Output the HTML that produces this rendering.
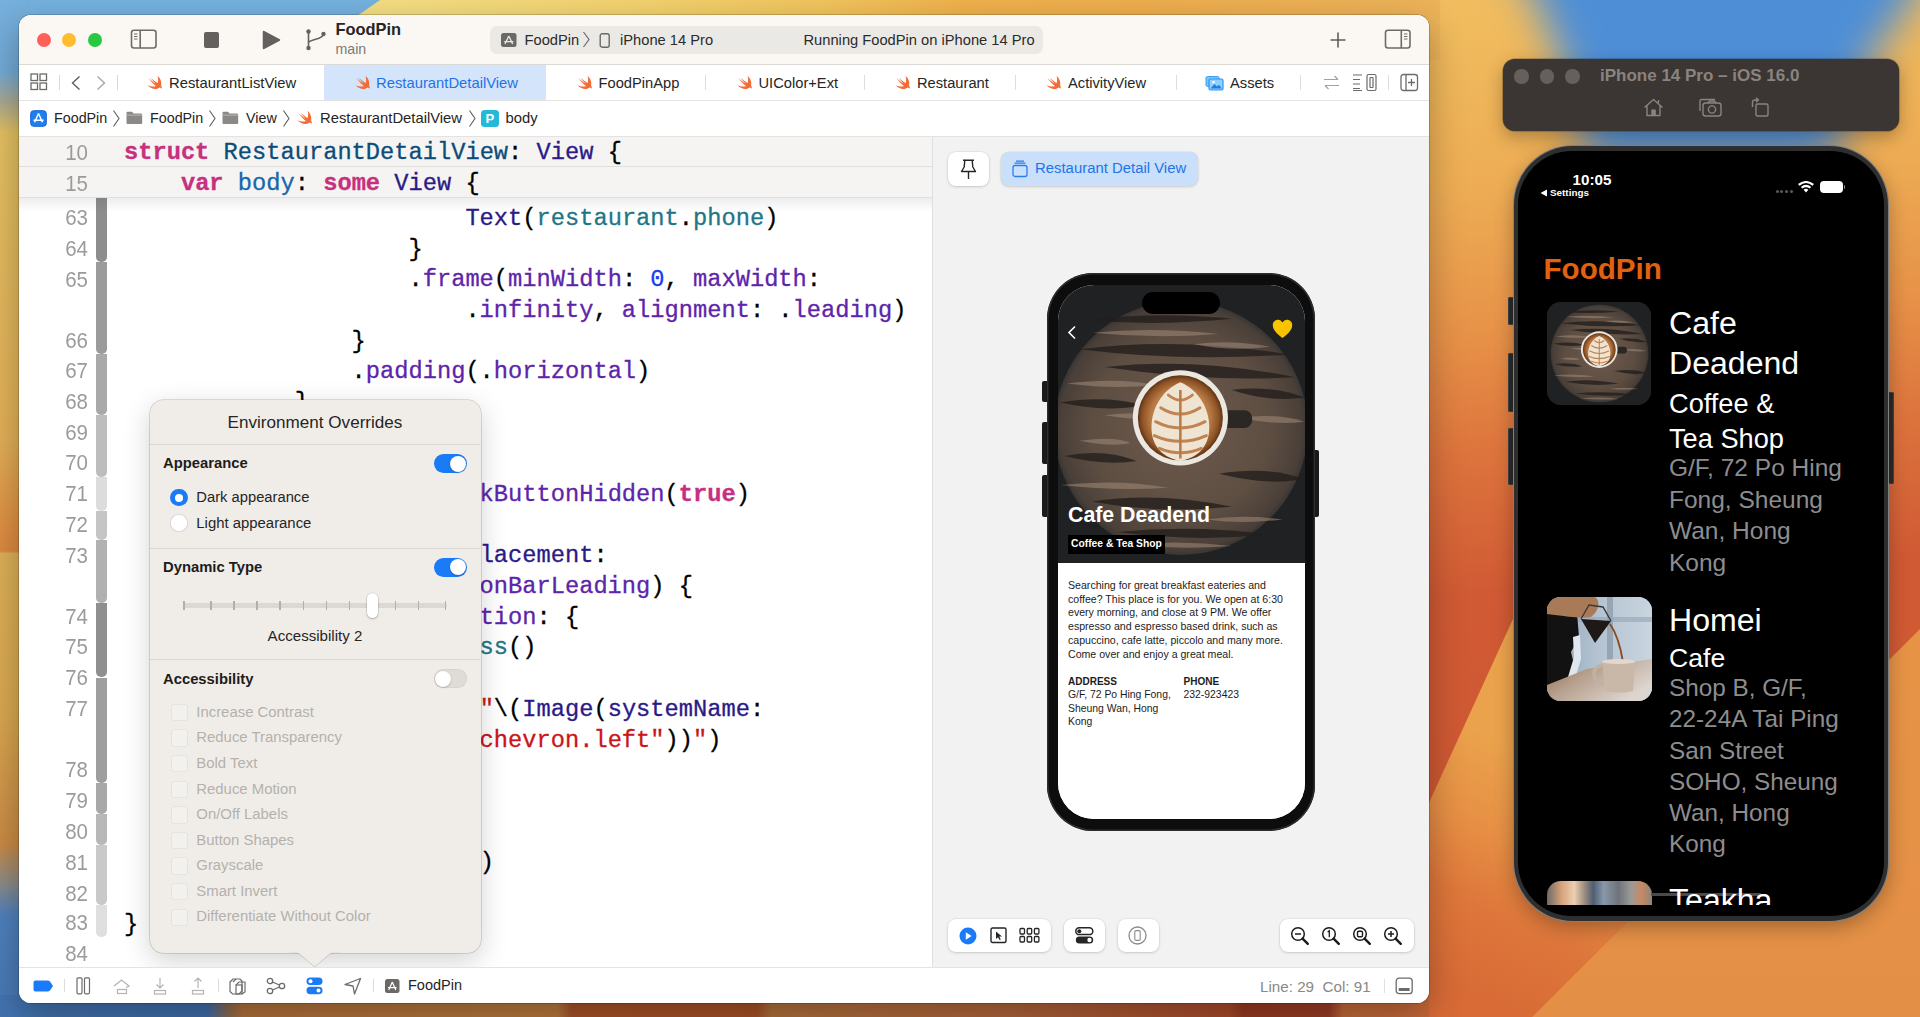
<!DOCTYPE html>
<html><head><meta charset="utf-8">
<style>
*{margin:0;padding:0;box-sizing:border-box}
html,body{width:1920px;height:1017px;overflow:hidden}
body{position:relative;font-family:"Liberation Sans",sans-serif;background:#e0873f}
.a{position:absolute}
.mono{font-family:"Liberation Mono",monospace}
#wall{position:absolute;left:0;top:0;width:1920px;height:1017px;overflow:hidden;background:linear-gradient(100deg,#e9a24e 0%,#e58a3c 50%,#df6c35 75%,#ea9a47 100%)}
#wall div{position:absolute;border-radius:50%}
#win{position:absolute;left:19px;top:15px;width:1410px;height:988px;border-radius:12px;overflow:hidden;background:#fff;box-shadow:0 0 0 0.8px rgba(0,0,0,.22),0 12px 35px rgba(0,0,0,.3)}
#wi{position:absolute;left:-19px;top:-15px;width:1920px;height:1017px}
.t{position:absolute;white-space:pre;line-height:1}
</style></head><body>
<svg width="0" height="0" style="position:absolute">
 <defs>
  <linearGradient id="swg" x1="0" y1="0" x2="1" y2="1"><stop offset="0" stop-color="#f88a36"/><stop offset="1" stop-color="#f05138"/></linearGradient>
  <symbol id="swift" viewBox="0 0 16 15"><path d="M10.5 0.8 C13.8 3.5 14.8 7.5 14.1 10.6 C14.6 11.5 15 12.6 15 13.8 C14.4 13 13.6 12.6 12.8 12.5 C10 14.6 5 15 0.5 10.3 C3.5 11.8 7 12 9 11 C6.6 9.2 3.5 6 1.4 3 C4 5.5 6.8 7.6 8.6 8.7 C6.8 6.8 5 4.8 3.6 2.8 C6 5 8.5 7 10.6 8.2 C11.4 5.6 11.3 3 10.5 0.8Z" fill="#f36b35"/></symbol>
  <radialGradient id="wood" cx="0.5" cy="0.5" r="0.5"><stop offset="0" stop-color="#6c5a4c"/><stop offset="0.7" stop-color="#5e4e42"/><stop offset="0.95" stop-color="#4a4039"/><stop offset="1" stop-color="#3a3633"/></radialGradient>
  <radialGradient id="crema" cx="0.5" cy="0.5" r="0.5"><stop offset="0" stop-color="#d39a62"/><stop offset="0.7" stop-color="#b87a44"/><stop offset="0.9" stop-color="#8d5226"/><stop offset="1" stop-color="#5e3415"/></radialGradient>
  <symbol id="coffee" viewBox="-130 -130 260 260">
    <rect x="-130" y="-130" width="260" height="260" fill="#1f2123"/>
    <circle cx="0" cy="0" r="100" fill="url(#wood)"/>
    <g fill="#231f1d" opacity="0.8">
      <path d="M-80 -62 Q0 -72 85 -58 Q0 -52 -80 -62Z"/>
      <path d="M-60 -48 Q10 -56 90 -40 Q20 -36 -60 -48Z"/>
      <path d="M-95 -20 Q-60 -26 -30 -18 Q-60 -12 -95 -20Z"/>
      <path d="M40 -30 Q70 -34 98 -24 Q70 -20 40 -30Z"/>
      <path d="M-92 22 Q-60 16 -35 26 Q-60 30 -92 22Z"/>
      <path d="M30 36 Q70 30 96 40 Q70 46 30 36Z"/>
      <path d="M-70 58 Q-20 50 40 62 Q-20 68 -70 58Z"/>
      <path d="M-50 82 Q10 76 70 84 Q10 90 -50 82Z"/>
      <path d="M-75 -85 Q-20 -92 40 -86 Q-20 -80 -75 -85Z"/>
    </g>
    <g fill="#a08a78" opacity="0.55">
      <path d="M-70 -75 Q-20 -80 30 -74 Q-20 -70 -70 -75Z"/>
      <path d="M-90 -35 Q-50 -40 -20 -34 Q-50 -30 -90 -35Z"/>
      <path d="M45 -8 Q75 -12 97 -5 Q75 -2 45 -8Z"/>
      <path d="M-95 45 Q-50 40 -10 47 Q-50 50 -95 45Z"/>
      <path d="M20 72 Q50 68 80 72 Q50 76 20 72Z"/>
      <path d="M-60 -10 Q-30 -14 -5 -8 Q-30 -5 -60 -10Z"/>
      <path d="M10 -66 Q40 -70 70 -64 Q40 -60 10 -66Z"/>
      <path d="M-80 10 Q-50 6 -40 12 Q-55 15 -80 10Z"/>
      <path d="M-40 92 Q0 88 40 93 Q0 96 -40 92Z"/>
    </g>
    <rect x="30" y="-14" width="26" height="14" rx="6" fill="#2a2725"/>
    <circle cx="-0.5" cy="-8" r="37.5" fill="#ebe7e1"/>
    <circle cx="-0.5" cy="-8" r="33.5" fill="url(#crema)"/>
    <path d="M-0.5 -36 C14 -30 24 -14 22 4 C20 18 10 24 -0.5 26 C-11 24 -21 18 -23 4 C-25 -14 -15 -30 -0.5 -36Z" fill="#efe3d2"/>
    <g fill="none" stroke="#c08352" stroke-width="2.3" stroke-linecap="round">
      <path d="M-16 -16 Q-0.5 -6 15 -16"/>
      <path d="M-20 -5 Q-0.5 5 19 -5"/>
      <path d="M-21 6 Q-0.5 15 20 6"/>
      <path d="M-17 16 Q-0.5 23 16 16"/>
      <path d="M-10 -26 Q-0.5 -18 9 -26"/>
    </g>
    <path d="M-0.5 -30 V24" stroke="#b97b45" stroke-width="2" fill="none"/>
  </symbol>
 </defs>
</svg>
<div id="wall">
  <div style="border-radius:0;left:0;top:0;width:1920px;height:1017px;background:linear-gradient(175deg,#efbe6c 0%,#f0bc5e 12%,#edac54 27%,#e79248 39%,#dd743d 49%,#d05a34 61%,#cf5733 100%)"></div>
  <div style="border-radius:0;left:0;top:0;width:1920px;height:1017px;clip-path:polygon(1380px 910px,1620px 385px,1760px 385px,1760px 789px,1532px 1017px,1380px 1017px);background:linear-gradient(205deg,#eca64e 0%,#eba24c 49%,#e68f44 54%,#de773b 58%,#d86b36 63%,#d56634 100%)"></div>
  <div style="border-radius:0;left:0;top:0;width:1920px;height:1017px;clip-path:polygon(1532px 1017px,1920px 629px,1920px 1017px);background:linear-gradient(0deg,#e48f46 0%,#e89546 50%,#eba04b 100%)"></div>
  <div style="border-radius:0;left:0;top:-200px;width:1920px;height:600px;filter:blur(20px)"><div style="border-radius:0;position:absolute;left:0;top:0;width:1920px;height:600px;clip-path:polygon(1400px 0px,2050px 0px,1912px 200px,1870px 259px,1830px 362px,1590px 362px,1561px 259px,1537px 200px);background:#4d8ed6"></div></div>
  <!-- top strip (left part) -->
  <div style="border-radius:0;left:0;top:0;width:1440px;height:60px;background:linear-gradient(90deg,#f5e18c 0%,#f4dd82 28%,#f3d26e 45%,#f1c35c 58%,#efb24c 67%,#eeae4e 80%,#ecb35a 100%)"></div>
  <div style="border-radius:0;left:0;top:0;width:400px;height:60px;clip-path:polygon(0 0,380px 0,357px 16px,0 16px);background:#75b2df"></div>
  <!-- left strip -->
  <div style="border-radius:0;left:0;top:0;width:30px;height:1017px;background:linear-gradient(180deg,#76b0dc 0%,#72a9d6 7%,#a8a890 10%,#e2c062 13%,#e2b058 43%,#de8f42 52%,#dc8840 54.2%,#dcb058 54.4%,#d9a850 70%,#c98a45 83%,#8a8a8a 87%,#4f80bc 90%,#4777b2 100%)"></div>
  <!-- bottom strip -->
  <div style="border-radius:0;left:0;top:995px;width:1429px;height:30px;background:linear-gradient(90deg,#4273b0 0%,#3f6ca8 14.5%,#8a6a50 16%,#b0703a 17%,#b8783a 39%,#a85228 40%,#a65026 53%,#b0703a 54%,#b0643a 70%,#a84a2a 86%,#983a22 87%,#9a3c24 93%,#c06838 94%,#c86838 100%)"></div>
</div>
<div id="win"><div id="wi">
  <!-- toolbar -->
  <div class="a" style="left:0;top:0;width:1920px;height:64px;background:#fbf8f3"></div>
  <div class="a" style="left:0;top:64px;width:1920px;height:1px;background:#dcdad7"></div>
  <div class="a" style="left:36.5px;top:32.5px;width:14px;height:14px;border-radius:50%;background:#fe5f57"></div>
  <div class="a" style="left:62px;top:32.5px;width:14px;height:14px;border-radius:50%;background:#febc2e"></div>
  <div class="a" style="left:87.5px;top:32.5px;width:14px;height:14px;border-radius:50%;background:#28c840"></div>
  <svg class="a" style="left:130px;top:29px" width="28" height="21" viewBox="0 0 28 21"><rect x="1.5" y="1.2" width="24.5" height="17.8" rx="2.5" fill="none" stroke="#6d6b69" stroke-width="1.6"/><line x1="10.2" y1="1.5" x2="10.2" y2="19" stroke="#6d6b69" stroke-width="1.6"/><line x1="4" y1="5" x2="7.5" y2="5" stroke="#6d6b69" stroke-width="1.1"/><line x1="4" y1="7.5" x2="7.5" y2="7.5" stroke="#6d6b69" stroke-width="1.1"/><line x1="4" y1="10" x2="7.5" y2="10" stroke="#6d6b69" stroke-width="1.1"/></svg>
  <div class="a" style="left:203.5px;top:32px;width:15.5px;height:15.5px;border-radius:2px;background:#63605e"></div>
  <svg class="a" style="left:262px;top:30px" width="19" height="20" viewBox="0 0 19 20"><path d="M1.5 1.5 L17.5 10 L1.5 18.5 Z" fill="#63605e" stroke="#63605e" stroke-width="1.5" stroke-linejoin="round"/></svg>
  <svg class="a" style="left:304px;top:28px" width="24" height="24" viewBox="0 0 24 24"><circle cx="4.5" cy="3.5" r="2.2" fill="#63605e"/><circle cx="4.5" cy="20" r="2.2" fill="#63605e"/><circle cx="19.5" cy="6" r="2.2" fill="#63605e"/><path d="M4.5 4 V20 M4.5 15 C4.5 11 19.5 12 19.5 6" fill="none" stroke="#63605e" stroke-width="1.6"/></svg>
  <div class="t" style="left:335.5px;top:21px;font-size:16.4px;font-weight:bold;color:#262524">FoodPin</div>
  <div class="t" style="left:335.5px;top:42px;font-size:14.2px;color:#7b7977">main</div>
  <div class="a" style="left:490px;top:25.5px;width:553px;height:28px;border-radius:7px;background:#ebe9e6"></div>
  <svg class="a" style="left:501px;top:33px" width="16" height="15" viewBox="0 0 16 15"><rect x="0" y="0" width="15.5" height="14" rx="2.5" fill="#6b6866"/><path d="M7.8 3 L4 11 M7.8 3 L11.6 11 M3.2 8.6 H12.4" stroke="#ebe9e6" stroke-width="1.3" fill="none"/></svg>
  <div class="t" style="left:524.5px;top:33px;font-size:14.7px;color:#2c2b2a">FoodPin</div>
  <svg class="a" style="left:582px;top:31px" width="9" height="17" viewBox="0 0 9 17"><path d="M1.5 1 L7 8.5 L1.5 16" fill="none" stroke="#6b6866" stroke-width="1.2"/></svg>
  <svg class="a" style="left:599px;top:33px" width="12" height="15" viewBox="0 0 12 15"><rect x="1.2" y="0.8" width="9" height="13.4" rx="2" fill="none" stroke="#6b6866" stroke-width="1.4"/></svg>
  <div class="t" style="left:620px;top:33px;font-size:14.7px;color:#2c2b2a">iPhone 14 Pro</div>
  <div class="t" style="left:803.5px;top:33px;font-size:14.7px;color:#2c2b2a">Running FoodPin on iPhone 14 Pro</div>
  <svg class="a" style="left:1329px;top:31px" width="18" height="18" viewBox="0 0 18 18"><path d="M9 1.5 V16.5 M1.5 9 H16.5" stroke="#5f5d5b" stroke-width="1.6"/></svg>
  <svg class="a" style="left:1384px;top:29px" width="28" height="21" viewBox="0 0 28 21"><rect x="1.5" y="1.2" width="24.5" height="17.8" rx="2.5" fill="none" stroke="#6d6b69" stroke-width="1.6"/><line x1="17.3" y1="1.5" x2="17.3" y2="19" stroke="#6d6b69" stroke-width="1.6"/><line x1="20" y1="5" x2="23.5" y2="5" stroke="#6d6b69" stroke-width="1.1"/><line x1="20" y1="7.5" x2="23.5" y2="7.5" stroke="#6d6b69" stroke-width="1.1"/><line x1="20" y1="10" x2="23.5" y2="10" stroke="#6d6b69" stroke-width="1.1"/></svg>
  <!-- tabs -->
  <div class="a" style="left:0;top:65px;width:1920px;height:35px;background:#fff"></div>
  <div class="a" style="left:0;top:100px;width:1920px;height:1px;background:#e4e3e2"></div>
  <div class="a" style="left:324px;top:65px;width:222px;height:35px;background:#d3e4fb"></div>
  <svg class="a" style="left:30px;top:73px" width="18" height="18" viewBox="0 0 18 18"><g fill="none" stroke="#6d6b69" stroke-width="1.3"><rect x="1" y="1" width="6.5" height="6.5"/><rect x="10" y="1" width="6.5" height="6.5"/><rect x="1" y="10" width="6.5" height="6.5"/><rect x="10" y="10" width="6.5" height="6.5"/></g></svg>
  <div class="a" style="left:59px;top:75px;width:1px;height:15px;background:#d8d8d8"></div>
  <svg class="a" style="left:70px;top:75px" width="12" height="16" viewBox="0 0 12 16"><path d="M9.5 1.5 L2.5 8 L9.5 14.5" fill="none" stroke="#5f5d5b" stroke-width="1.4"/></svg>
  <svg class="a" style="left:95px;top:75px" width="12" height="16" viewBox="0 0 12 16"><path d="M2.5 1.5 L9.5 8 L2.5 14.5" fill="none" stroke="#a9a7a5" stroke-width="1.4"/></svg>
  <div class="a" style="left:117px;top:75px;width:1px;height:15px;background:#d8d8d8"></div>
  <svg class="a sw" style="left:147px;top:75px" width="16" height="15" viewBox="0 0 16 15"><use href="#swift"/></svg>
  <div class="t" style="left:169px;top:75.5px;font-size:14.8px;color:#262524">RestaurantListView</div>
  <svg class="a sw" style="left:354.5px;top:75px" width="16" height="15" viewBox="0 0 16 15"><use href="#swift"/></svg>
  <div class="t" style="left:376px;top:75.5px;font-size:14.8px;color:#1f73e5">RestaurantDetailView</div>
  <svg class="a sw" style="left:577px;top:75px" width="16" height="15" viewBox="0 0 16 15"><use href="#swift"/></svg>
  <div class="t" style="left:598.5px;top:75.5px;font-size:14.7px;color:#262524">FoodPinApp</div>
  <div class="a" style="left:705px;top:75px;width:1px;height:15px;background:#dedede"></div>
  <svg class="a sw" style="left:736.5px;top:75px" width="16" height="15" viewBox="0 0 16 15"><use href="#swift"/></svg>
  <div class="t" style="left:758.5px;top:75.5px;font-size:14.7px;color:#262524">UIColor+Ext</div>
  <div class="a" style="left:863.5px;top:75px;width:1px;height:15px;background:#dedede"></div>
  <svg class="a sw" style="left:895px;top:75px" width="16" height="15" viewBox="0 0 16 15"><use href="#swift"/></svg>
  <div class="t" style="left:917px;top:75.5px;font-size:14.7px;color:#262524">Restaurant</div>
  <div class="a" style="left:1015px;top:75px;width:1px;height:15px;background:#dedede"></div>
  <svg class="a sw" style="left:1045.5px;top:75px" width="16" height="15" viewBox="0 0 16 15"><use href="#swift"/></svg>
  <div class="t" style="left:1068px;top:75.5px;font-size:14.7px;color:#262524">ActivityView</div>
  <div class="a" style="left:1176px;top:75px;width:1px;height:15px;background:#dedede"></div>
  <svg class="a" style="left:1205px;top:74px" width="19" height="17" viewBox="0 0 19 17"><rect x="1" y="2.5" width="13" height="10" rx="1.5" fill="#7cc4f8" stroke="#3b9ef0" stroke-width="1"/><rect x="4" y="5" width="14" height="11" rx="1.5" fill="#8ed0ff" stroke="#2f95ee" stroke-width="1.2"/><path d="M5.5 14.5 L9.5 10 L12 12.5 L14 10.8 L16.8 14.5 Z" fill="#1f7fe0"/><circle cx="8.5" cy="8.3" r="1.3" fill="#fff"/></svg>
  <div class="t" style="left:1230px;top:75.5px;font-size:14.7px;color:#262524">Assets</div>
  <div class="a" style="left:1300px;top:75px;width:1px;height:15px;background:#dedede"></div>
  <svg class="a" style="left:1322px;top:73px" width="19" height="19" viewBox="0 0 19 19"><g fill="none" stroke="#a4a2a0" stroke-width="1.2"><path d="M2 6.5 H16 M12.5 3 L16 6.5 M17 12.5 H3 M6.5 16 L3 12.5"/></g></svg>
  <svg class="a" style="left:1352px;top:73px" width="26" height="19" viewBox="0 0 26 19"><g fill="none" stroke="#6d6b69" stroke-width="1.2"><path d="M1 2 H10 M1 6.5 H8 M1 11 H8 M1 15.5 H8 M1 17.5 H10"/><rect x="15" y="1.5" width="9" height="16" rx="1.5"/><rect x="18" y="4.5" width="3" height="10" rx="0.5"/></g></svg>
  <div class="a" style="left:1388px;top:75px;width:1px;height:15px;background:#dedede"></div>
  <svg class="a" style="left:1400px;top:73px" width="19" height="19" viewBox="0 0 19 19"><g fill="none" stroke="#6d6b69" stroke-width="1.3"><rect x="1" y="1.5" width="16.5" height="16" rx="2.5"/><path d="M6 1.5 V17.5 M11.5 6 V13 M8 9.5 H15"/></g></svg>
  <!-- jump bar -->
  <div class="a" style="left:0;top:101px;width:1920px;height:35px;background:#fff"></div>
  <div class="a" style="left:0;top:136px;width:1920px;height:1px;background:#e4e3e2"></div>
  <svg class="a" style="left:29.5px;top:109.5px" width="17" height="17" viewBox="0 0 17 17"><rect x="0.7" y="0.7" width="15.6" height="15.6" rx="3" fill="#1f7ef0" stroke="#1560d8" stroke-width="1"/><path d="M8.5 3.5 L4.6 12.2 M8.5 3.5 L12.4 12.2 M3.5 10.2 H13.5" stroke="#fff" stroke-width="1.5" fill="none"/></svg>
  <div class="t" style="left:54px;top:110.5px;font-size:14.3px;color:#262524">FoodPin</div>
  <svg class="a" style="left:112px;top:109px" width="9" height="19" viewBox="0 0 9 19"><path d="M1.5 1.5 L7 9.5 L1.5 17.5" fill="none" stroke="#5f5d5b" stroke-width="1.1"/></svg>
  <svg class="a" style="left:126px;top:111px" width="17" height="14" viewBox="0 0 17 14"><path d="M0.5 2 Q0.5 0.8 1.7 0.8 H6 L7.5 2.5 H15 Q16.2 2.5 16.2 3.7 V12 Q16.2 13 15 13 H1.7 Q0.5 13 0.5 12 Z" fill="#8b8987"/><rect x="0.5" y="3.6" width="15.7" height="1" fill="#b9b7b5"/></svg>
  <div class="t" style="left:150px;top:110.5px;font-size:14.3px;color:#262524">FoodPin</div>
  <svg class="a" style="left:207.5px;top:109px" width="9" height="19" viewBox="0 0 9 19"><path d="M1.5 1.5 L7 9.5 L1.5 17.5" fill="none" stroke="#5f5d5b" stroke-width="1.1"/></svg>
  <svg class="a" style="left:222px;top:111px" width="17" height="14" viewBox="0 0 17 14"><path d="M0.5 2 Q0.5 0.8 1.7 0.8 H6 L7.5 2.5 H15 Q16.2 2.5 16.2 3.7 V12 Q16.2 13 15 13 H1.7 Q0.5 13 0.5 12 Z" fill="#8b8987"/><rect x="0.5" y="3.6" width="15.7" height="1" fill="#b9b7b5"/></svg>
  <div class="t" style="left:246px;top:110.5px;font-size:14.3px;color:#262524">View</div>
  <svg class="a" style="left:282px;top:109px" width="9" height="19" viewBox="0 0 9 19"><path d="M1.5 1.5 L7 9.5 L1.5 17.5" fill="none" stroke="#5f5d5b" stroke-width="1.1"/></svg>
  <svg class="a sw" style="left:296.5px;top:110px" width="16" height="15" viewBox="0 0 16 15"><use href="#swift"/></svg>
  <div class="t" style="left:320px;top:110.5px;font-size:14.8px;color:#262524">RestaurantDetailView</div>
  <svg class="a" style="left:467.5px;top:109px" width="9" height="19" viewBox="0 0 9 19"><path d="M1.5 1.5 L7 9.5 L1.5 17.5" fill="none" stroke="#5f5d5b" stroke-width="1.1"/></svg>
  <div class="a" style="left:481px;top:109.5px;width:17.5px;height:17px;border-radius:3.5px;background:#25b9d8;color:#fff;font-size:13px;font-weight:bold;line-height:17px;text-align:center">P</div>
  <div class="t" style="left:505.5px;top:110.5px;font-size:14.8px;color:#262524">body</div>
  <!-- editor -->
  <div class="a" style="left:0;top:137px;width:932px;height:830px;background:#fff"></div>
  <div class="a mono" style="left:124px;top:203.84px;font-size:23.71px;line-height:30.68px;white-space:pre;color:#000;-webkit-text-stroke:0.3px"><div>                        <span style="color:#2b1a88">Text</span>(<span style="color:#1f7686">restaurant</span>.<span style="color:#1f7686">phone</span>)</div><div>                    }</div><div>                    .<span style="color:#5e24ab">frame</span>(<span style="color:#5e24ab">minWidth</span>: <span style="color:#1a3cf0">0</span>, <span style="color:#5e24ab">maxWidth</span>:</div><div>                        .<span style="color:#5e24ab">infinity</span>, <span style="color:#5e24ab">alignment</span>: .<span style="color:#5e24ab">leading</span>)</div><div>                }</div><div>                .<span style="color:#5e24ab">padding</span>(.<span style="color:#5e24ab">horizontal</span>)</div><div>            }</div><div>        }</div><div>    }</div><div>        .<span style="color:#5e24ab">navigationBarBackButtonHidden</span>(<b style="color:#c7307f">true</b>)</div><div>        .<span style="color:#5e24ab">toolbar</span> {</div><div>            <span style="color:#2b1a88">ToolbarItem</span>(<span style="color:#2b1a88">placement</span>:</div><div>                .<span style="color:#5e24ab">navigationBarLeading</span>) {</div><div>                <span style="color:#2b1a88">Button</span>(<span style="color:#5e24ab">action</span>: {</div><div>                    <span style="color:#1f7686">dismiss</span>()</div><div>                }) {</div><div>                    <span style="color:#2b1a88">Text</span>(<span style="color:#c8161a">"</span>\(<span style="color:#2b1a88">Image</span>(<span style="color:#2b1a88">systemName</span>:</div><div>                        <span style="color:#c8161a">"chevron.left"</span>))<span style="color:#c8161a">"</span>)</div><div>                }</div><div>            }</div><div>        }</div><div>        .<span style="color:#5e24ab">ignoresSafeArea</span>()</div><div>    }</div><div>}</div><div>&nbsp;</div></div>
  <div class="a" style="left:20px;top:202.35px;width:68px;font-size:20.5px;line-height:27.8909px;text-align:right;color:#9c9b99;transform:scaleY(1.1);transform-origin:0 0"><div>63</div><div>64</div><div>65</div><div>&nbsp;</div><div>66</div><div>67</div><div>68</div><div>69</div><div>70</div><div>71</div><div>72</div><div>73</div><div>&nbsp;</div><div>74</div><div>75</div><div>76</div><div>77</div><div>&nbsp;</div><div>78</div><div>79</div><div>80</div><div>81</div><div>82</div><div>83</div><div>84</div></div>
  <div class="a" style="left:96px;top:198px;width:11px;height:63.5px;background:#8d8d8d;border-radius:0 0 5px 5px"></div>
  <div class="a" style="left:96px;top:262px;width:11px;height:91.5px;background:#9b9b9b;border-radius:0 0 5px 5px"></div>
  <div class="a" style="left:96px;top:354px;width:11px;height:60.5px;background:#a9a9a9;border-radius:0 0 5px 5px"></div>
  <div class="a" style="left:96px;top:415px;width:11px;height:61.5px;background:#bdbdbd;border-radius:0 0 5px 5px"></div>
  <div class="a" style="left:96px;top:477px;width:11px;height:33.5px;background:#dcdcdc;border-radius:0 0 5px 5px"></div>
  <div class="a" style="left:96px;top:511px;width:11px;height:28.5px;background:#c5c5c5;border-radius:0 0 5px 5px"></div>
  <div class="a" style="left:96px;top:540px;width:11px;height:62.5px;background:#b1b1b1;border-radius:0 0 5px 5px"></div>
  <div class="a" style="left:96px;top:603px;width:11px;height:74.0px;background:#8f8f8f;border-radius:0 0 5px 5px"></div>
  <div class="a" style="left:96px;top:677.5px;width:11px;height:105.0px;background:#9e9e9e;border-radius:0 0 5px 5px"></div>
  <div class="a" style="left:96px;top:783px;width:11px;height:30.5px;background:#a8a8a8;border-radius:0 0 5px 5px"></div>
  <div class="a" style="left:96px;top:814px;width:11px;height:30.5px;background:#b8b8b8;border-radius:0 0 5px 5px"></div>
  <div class="a" style="left:96px;top:845px;width:11px;height:59.5px;background:#c9c9c9;border-radius:0 0 5px 5px"></div>
  <div class="a" style="left:96px;top:905px;width:11px;height:31.5px;background:#dfdfdf;border-radius:0 0 5px 5px"></div>
  <div class="a" style="left:19px;top:198px;width:913px;height:14px;background:linear-gradient(rgba(0,0,0,.07),rgba(0,0,0,0))"></div>
  <div class="a" style="left:0;top:137px;width:932px;height:61px;background:#f5f4f2"></div>
  <div class="a" style="left:0;top:166px;width:932px;height:1px;background:#e0dfdd"></div>
  <div class="a" style="left:0;top:197px;width:932px;height:1px;background:#e0dfdd"></div>
  <div class="a mono" style="left:124px;top:138.24px;font-size:23.71px;line-height:30.8px;white-space:pre;color:#000;-webkit-text-stroke:0.3px"><div><b style="color:#c7307f">struct</b> <span style="color:#0d4c78">RestaurantDetailView</span>: <span style="color:#2b1a88">View</span> {</div><div>    <b style="color:#c7307f">var</b> <span style="color:#1567ad">body</span>: <b style="color:#c7307f">some</b> <span style="color:#2b1a88">View</span> {</div></div>
  <div class="a" style="left:20px;top:136.69px;width:68px;font-size:20.5px;line-height:28.0000px;text-align:right;color:#9c9b99;transform:scaleY(1.1);transform-origin:0 0"><div>10</div><div>15</div></div>
  <!-- popover -->
  <div class="a" style="left:149.5px;top:400px;width:331px;height:552.5px;border-radius:14px;background:#f0ede9;box-shadow:0 0 0 0.8px rgba(0,0,0,.16),0 8px 28px rgba(0,0,0,.18)"></div>
  <svg class="a" style="left:290px;top:951px" width="50" height="18" viewBox="0 0 50 18"><path d="M0 1.5 C6 1.5 8 1.5 12 5 L24.7 16.2 L37.4 5 C41.4 1.5 43.4 1.5 50 1.5" fill="#f0ede9" stroke="rgba(0,0,0,.16)" stroke-width="0.9"/><rect x="0" y="0" width="50" height="1.6" fill="#f0ede9"/></svg>
  <div class="t" style="left:115px;width:400px;text-align:center;top:414.32px;font-size:17.1px;color:#262524">Environment Overrides</div>
  <div class="a" style="left:150px;top:444px;width:330px;height:1px;background:#dad7d3"></div>
  <div class="a" style="left:150px;top:548px;width:330px;height:1px;background:#dad7d3"></div>
  <div class="a" style="left:150px;top:659px;width:330px;height:1px;background:#dad7d3"></div>
  <div class="t" style="left:163px;top:456.47px;font-size:14.8px;font-weight:bold;color:#1d1c1b">Appearance</div>
  <div class="t" style="left:163px;top:560.47px;font-size:14.8px;font-weight:bold;color:#1d1c1b">Dynamic Type</div>
  <div class="t" style="left:163px;top:671.77px;font-size:14.8px;font-weight:bold;color:#1d1c1b">Accessibility</div>
  <div class="a" style="left:433.5px;top:454px;width:33.5px;height:19px;border-radius:9.5px;background:#1b7bf6"></div>  <div class="a" style="left:449.5px;top:455.5px;width:16px;height:16px;border-radius:50%;background:#fff;box-shadow:0 0.5px 1.5px rgba(0,0,0,.3)"></div>
  <div class="a" style="left:433.5px;top:557.5px;width:33.5px;height:19px;border-radius:9.5px;background:#1b7bf6"></div>  <div class="a" style="left:449.5px;top:559.0px;width:16px;height:16px;border-radius:50%;background:#fff;box-shadow:0 0.5px 1.5px rgba(0,0,0,.3)"></div>
  <div class="a" style="left:433.5px;top:669px;width:33.5px;height:19px;border-radius:9.5px;background:#dfdcd8;box-shadow:inset 0 0 0 0.6px rgba(0,0,0,.08)"></div>  <div class="a" style="left:435px;top:670.5px;width:16px;height:16px;border-radius:50%;background:#fff;box-shadow:0 0.5px 1.5px rgba(0,0,0,.3)"></div>
  <div class="a" style="left:170.2px;top:488.8px;width:17.6px;height:17.6px;border-radius:50%;background:#1b7bf6"></div>
  <div class="a" style="left:175px;top:493.6px;width:8px;height:8px;border-radius:50%;background:#fff"></div>
  <div class="a" style="left:170.2px;top:514.4px;width:17.6px;height:17.6px;border-radius:50%;background:#fff;box-shadow:inset 0 0 0 0.8px rgba(0,0,0,.18)"></div>
  <div class="t" style="left:196.3px;top:490.11px;font-size:14.75px;color:#262524">Dark appearance</div>
  <div class="t" style="left:196.3px;top:515.59px;font-size:14.9px;color:#262524">Light appearance</div>
  <div class="a" style="left:183px;top:602.5px;width:264px;height:5px;border-radius:2.5px;background:#dcd9d5"></div>
  <div class="a" style="left:183.3px;top:600.5px;width:1.6px;height:9.5px;background:#b3b0ac"></div>
  <div class="a" style="left:210.3px;top:600.5px;width:1.6px;height:9.5px;background:#b3b0ac"></div>
  <div class="a" style="left:233.1px;top:600.5px;width:1.6px;height:9.5px;background:#b3b0ac"></div>
  <div class="a" style="left:256.2px;top:600.5px;width:1.6px;height:9.5px;background:#b3b0ac"></div>
  <div class="a" style="left:279.4px;top:600.5px;width:1.6px;height:9.5px;background:#b3b0ac"></div>
  <div class="a" style="left:302.5px;top:600.5px;width:1.6px;height:9.5px;background:#b3b0ac"></div>
  <div class="a" style="left:325.6px;top:600.5px;width:1.6px;height:9.5px;background:#b3b0ac"></div>
  <div class="a" style="left:348.5px;top:600.5px;width:1.6px;height:9.5px;background:#b3b0ac"></div>
  <div class="a" style="left:394.5px;top:600.5px;width:1.6px;height:9.5px;background:#b3b0ac"></div>
  <div class="a" style="left:417.5px;top:600.5px;width:1.6px;height:9.5px;background:#b3b0ac"></div>
  <div class="a" style="left:444.7px;top:600.5px;width:1.6px;height:9.5px;background:#b3b0ac"></div>
  <div class="a" style="left:366.5px;top:592.5px;width:11.5px;height:25.5px;border-radius:5.75px;background:#fff;box-shadow:0 0 0 0.5px rgba(0,0,0,.12),0 1px 2px rgba(0,0,0,.25)"></div>
  <div class="t" style="left:115px;width:400px;text-align:center;top:627.62px;font-size:15.1px;color:#262524">Accessibility 2</div>
  <div class="a" style="left:170.5px;top:703.90px;width:17.4px;height:17.4px;border-radius:4px;background:#f3f1ee;box-shadow:inset 0 0 0 0.8px rgba(0,0,0,.07)"></div>
  <div class="t" style="left:196.3px;top:704.79px;font-size:14.9px;color:#b4b1ad">Increase Contrast</div>
  <div class="a" style="left:170.5px;top:729.48px;width:17.4px;height:17.4px;border-radius:4px;background:#f3f1ee;box-shadow:inset 0 0 0 0.8px rgba(0,0,0,.07)"></div>
  <div class="t" style="left:196.3px;top:730.37px;font-size:14.9px;color:#b4b1ad">Reduce Transparency</div>
  <div class="a" style="left:170.5px;top:755.06px;width:17.4px;height:17.4px;border-radius:4px;background:#f3f1ee;box-shadow:inset 0 0 0 0.8px rgba(0,0,0,.07)"></div>
  <div class="t" style="left:196.3px;top:755.95px;font-size:14.9px;color:#b4b1ad">Bold Text</div>
  <div class="a" style="left:170.5px;top:780.64px;width:17.4px;height:17.4px;border-radius:4px;background:#f3f1ee;box-shadow:inset 0 0 0 0.8px rgba(0,0,0,.07)"></div>
  <div class="t" style="left:196.3px;top:781.53px;font-size:14.9px;color:#b4b1ad">Reduce Motion</div>
  <div class="a" style="left:170.5px;top:806.22px;width:17.4px;height:17.4px;border-radius:4px;background:#f3f1ee;box-shadow:inset 0 0 0 0.8px rgba(0,0,0,.07)"></div>
  <div class="t" style="left:196.3px;top:807.11px;font-size:14.9px;color:#b4b1ad">On/Off Labels</div>
  <div class="a" style="left:170.5px;top:831.80px;width:17.4px;height:17.4px;border-radius:4px;background:#f3f1ee;box-shadow:inset 0 0 0 0.8px rgba(0,0,0,.07)"></div>
  <div class="t" style="left:196.3px;top:832.69px;font-size:14.9px;color:#b4b1ad">Button Shapes</div>
  <div class="a" style="left:170.5px;top:857.38px;width:17.4px;height:17.4px;border-radius:4px;background:#f3f1ee;box-shadow:inset 0 0 0 0.8px rgba(0,0,0,.07)"></div>
  <div class="t" style="left:196.3px;top:858.27px;font-size:14.9px;color:#b4b1ad">Grayscale</div>
  <div class="a" style="left:170.5px;top:882.96px;width:17.4px;height:17.4px;border-radius:4px;background:#f3f1ee;box-shadow:inset 0 0 0 0.8px rgba(0,0,0,.07)"></div>
  <div class="t" style="left:196.3px;top:883.85px;font-size:14.9px;color:#b4b1ad">Smart Invert</div>
  <div class="a" style="left:170.5px;top:908.54px;width:17.4px;height:17.4px;border-radius:4px;background:#f3f1ee;box-shadow:inset 0 0 0 0.8px rgba(0,0,0,.07)"></div>
  <div class="t" style="left:196.3px;top:909.43px;font-size:14.9px;color:#b4b1ad">Differentiate Without Color</div>
  <!-- canvas -->
  <div class="a" style="left:932px;top:137px;width:497px;height:830px;background:#f2f2f2"></div>
  <div class="a" style="left:932px;top:137px;width:1px;height:830px;background:#dfdfdf"></div>
  <div class="a" style="left:948px;top:152px;width:41px;height:33.5px;border-radius:8px;background:#fff;box-shadow:0 0 0 0.5px rgba(0,0,0,.08),0 1px 3px rgba(0,0,0,.15)"></div>
  <svg class="a" style="left:960px;top:159px" width="17" height="21" viewBox="0 0 17 21"><g fill="none" stroke="#262524" stroke-width="1.4" stroke-linejoin="round"><path d="M3 1.2 H14 M4.8 1.2 L4.2 8 L1.5 12.5 H15.5 L12.8 8 L12.2 1.2 M8.5 12.5 V20"/></g></svg>
  <div class="a" style="left:1001px;top:152px;width:196.5px;height:34px;border-radius:8px;background:#c9dffa;box-shadow:0 0 0 0.5px rgba(0,0,0,.06),0 1px 3px rgba(0,0,0,.14)"></div>
  <svg class="a" style="left:1011px;top:160px" width="18" height="18" viewBox="0 0 18 18"><g fill="none" stroke="#2a7ef0" stroke-width="1.3"><rect x="2" y="5.5" width="14" height="11" rx="2"/><path d="M3.5 3.2 H14.5 M5 1.2 H13"/></g></svg>
  <div class="t" style="left:1035px;top:160.5px;font-size:14.9px;color:#1f74e8">Restaurant Detail View</div>
  <!-- preview phone -->
  <div class="a" style="left:1042px;top:381px;width:5px;height:21px;border-radius:2px 0 0 2px;background:#1a1a1a"></div>
  <div class="a" style="left:1042px;top:422px;width:5px;height:42px;border-radius:2px 0 0 2px;background:#1a1a1a"></div>
  <div class="a" style="left:1042px;top:475px;width:5px;height:42px;border-radius:2px 0 0 2px;background:#1a1a1a"></div>
  <div class="a" style="left:1314px;top:450px;width:5px;height:67px;border-radius:0 2px 2px 0;background:#1a1a1a"></div>
  <div class="a" style="left:1047px;top:273px;width:268px;height:558px;border-radius:46px;background:#0d0d0d;box-shadow:inset 0 0 0 1.5px #2e2e2e"></div>
  <div class="a" style="left:1058px;top:285px;width:246.5px;height:534px;border-radius:36px;background:#fff;overflow:hidden">
    <svg class="a" style="left:-42px;top:-22px" width="330" height="330"><use href="#coffee" x="0" y="0" width="330" height="330"/></svg>
    <div class="a" style="left:0;top:278px;width:247px;height:260px;background:#fff"></div>
  </div>
  <div class="a" style="left:1142px;top:292px;width:78px;height:22px;border-radius:11px;background:#000"></div>
  <svg class="a" style="left:1066px;top:325px" width="12" height="15" viewBox="0 0 12 15"><path d="M9 1.5 L3 7.5 L9 13.5" fill="none" stroke="#fff" stroke-width="1.6"/></svg>
  <svg class="a" style="left:1272px;top:319px" width="21" height="20" viewBox="0 0 21 20"><path d="M10.5 19 C4 14 0.8 10.5 0.8 6 C0.8 3 3.2 0.8 6 0.8 C8 0.8 9.6 1.9 10.5 3.6 C11.4 1.9 13 0.8 15 0.8 C17.8 0.8 20.2 3 20.2 6 C20.2 10.5 17 14 10.5 19Z" fill="#f9c300"/></svg>
  <div class="t" style="left:1068px;top:504.5px;font-size:21.3px;font-weight:bold;color:#fff">Cafe Deadend</div>
  <div class="a" style="left:1068px;top:534.5px;width:97px;height:19px;background:#000"></div>
  <div class="t" style="left:1071px;top:538.5px;font-size:10.3px;font-weight:bold;color:#fff">Coffee &amp; Tea Shop</div>
  <div class="a" style="left:1068px;top:579px;width:230px;font-size:10.6px;line-height:13.7px;color:#1c1c1c">Searching for great breakfast eateries and<br>coffee? This place is for you. We open at 6:30<br>every morning, and close at 9 PM. We offer<br>espresso and espresso based drink, such as<br>capuccino, cafe latte, piccolo and many more.<br>Come over and enjoy a great meal.</div>
  <div class="t" style="left:1068px;top:677px;font-size:10px;font-weight:bold;color:#1c1c1c">ADDRESS</div>
  <div class="t" style="left:1183.5px;top:677px;font-size:10px;font-weight:bold;color:#1c1c1c">PHONE</div>
  <div class="a" style="left:1068px;top:688px;width:115px;font-size:10.4px;line-height:13.6px;color:#1c1c1c">G/F, 72 Po Hing Fong,<br>Sheung Wan, Hong<br>Kong</div>
  <div class="t" style="left:1183.5px;top:690px;font-size:10.4px;color:#1c1c1c">232-923423</div>
  <!-- canvas bottom controls -->
  <div class="a" style="left:948px;top:918.5px;width:103px;height:33.5px;border-radius:8px;background:#fff;box-shadow:0 0 0 0.5px rgba(0,0,0,.07),0 1px 3px rgba(0,0,0,.15)"></div>
  <div class="a" style="left:1063.5px;top:918.5px;width:41.5px;height:33.5px;border-radius:8px;background:#fff;box-shadow:0 0 0 0.5px rgba(0,0,0,.07),0 1px 3px rgba(0,0,0,.15)"></div>
  <div class="a" style="left:1118px;top:918.5px;width:40.5px;height:33.5px;border-radius:8px;background:#fff;box-shadow:0 0 0 0.5px rgba(0,0,0,.07),0 1px 3px rgba(0,0,0,.15)"></div>
  <div class="a" style="left:1280px;top:918.5px;width:133.5px;height:33.5px;border-radius:8px;background:#fff;box-shadow:0 0 0 0.5px rgba(0,0,0,.07),0 1px 3px rgba(0,0,0,.15)"></div>
  <svg class="a" style="left:959px;top:926.5px" width="18" height="18" viewBox="0 0 18 18"><circle cx="9" cy="9" r="8.5" fill="#1b7bf6"/><path d="M6.8 5.2 L12.6 9 L6.8 12.8Z" fill="#fff"/></svg>
  <svg class="a" style="left:990px;top:927px" width="17" height="17" viewBox="0 0 17 17"><rect x="1" y="1" width="15" height="14.5" rx="1.5" fill="none" stroke="#262524" stroke-width="1.4"/><path d="M6 4.5 L6 12 L8 10.2 L9.6 13 L10.8 12.4 L9.3 9.6 L12 9.4Z" fill="#262524"/></svg>
  <svg class="a" style="left:1019px;top:927px" width="21" height="17" viewBox="0 0 21 17"><g fill="none" stroke="#262524" stroke-width="1.3"><rect x="1" y="1.5" width="4.5" height="5.5" rx="1"/><rect x="8.2" y="1.5" width="4.5" height="5.5" rx="1"/><rect x="15.4" y="1.5" width="4.5" height="5.5" rx="1"/><rect x="1" y="9.5" width="4.5" height="5.5" rx="1"/><rect x="8.2" y="9.5" width="4.5" height="5.5" rx="1"/><rect x="15.4" y="9.5" width="4.5" height="5.5" rx="1"/></g></svg>
  <svg class="a" style="left:1075px;top:927px" width="19" height="17" viewBox="0 0 19 17"><rect x="0.8" y="0.8" width="17" height="6.8" rx="3.4" fill="none" stroke="#262524" stroke-width="1.5"/><circle cx="4.3" cy="4.2" r="2" fill="#262524"/><rect x="0.8" y="9.4" width="17.4" height="7.2" rx="3.6" fill="#262524"/><circle cx="14.5" cy="13" r="2.2" fill="#fff"/></svg>
  <svg class="a" style="left:1128px;top:926px" width="19" height="19" viewBox="0 0 19 19"><circle cx="9.5" cy="9.5" r="8.5" fill="none" stroke="#8e8c8a" stroke-width="1.3"/><rect x="6.8" y="4.6" width="5.4" height="9.8" rx="1.2" fill="none" stroke="#8e8c8a" stroke-width="1.1"/></svg>
  <svg class="a" style="left:1290px;top:926px" width="21" height="20" viewBox="0 0 21 20"><g fill="none" stroke="#1c1c1c" stroke-width="1.5"><circle cx="8" cy="8" r="6.3"/><path d="M12.6 12.6 L17.8 17.8" stroke-width="2.4" stroke-linecap="round"/><path d="M5 8 H11"/></g></svg>
  <svg class="a" style="left:1321px;top:926px" width="21" height="20" viewBox="0 0 21 20"><g fill="none" stroke="#1c1c1c" stroke-width="1.5"><circle cx="8" cy="8" r="6.3"/><path d="M12.6 12.6 L17.8 17.8" stroke-width="2.4" stroke-linecap="round"/><path d="M6.6 6 L8.3 4.8 V11.2" stroke-width="1.3"/></g></svg>
  <svg class="a" style="left:1352px;top:926px" width="21" height="20" viewBox="0 0 21 20"><g fill="none" stroke="#1c1c1c" stroke-width="1.5"><circle cx="8" cy="8" r="6.3"/><path d="M12.6 12.6 L17.8 17.8" stroke-width="2.4" stroke-linecap="round"/><rect x="5.5" y="5.2" width="5" height="5.6" rx="1.2" stroke-width="1.4"/></g></svg>
  <svg class="a" style="left:1383px;top:926px" width="21" height="20" viewBox="0 0 21 20"><g fill="none" stroke="#1c1c1c" stroke-width="1.5"><circle cx="8" cy="8" r="6.3"/><path d="M12.6 12.6 L17.8 17.8" stroke-width="2.4" stroke-linecap="round"/><path d="M5 8 H11 M8 5 V11"/></g></svg>
  <!-- status bar -->
  <div class="a" style="left:0;top:967px;width:1920px;height:1px;background:#e4e3e2"></div>
  <div class="a" style="left:0;top:968px;width:1920px;height:40px;background:#fff"></div>
  <svg class="a" style="left:33px;top:980px" width="21" height="12" viewBox="0 0 21 12"><path d="M2.5 0.5 H14.5 Q16 0.5 17 1.6 L20 6 L17 10.4 Q16 11.5 14.5 11.5 H2.5 Q0.5 11.5 0.5 9.5 V2.5 Q0.5 0.5 2.5 0.5Z" fill="#1b7bf6"/></svg>
  <div class="a" style="left:63.5px;top:979px;width:1px;height:13px;background:#dcdcdc"></div>
  <svg class="a" style="left:76px;top:977px" width="15" height="18" viewBox="0 0 15 18"><g fill="none" stroke="#6d6b69" stroke-width="1.2"><rect x="1" y="0.8" width="5" height="16" rx="1.2"/><rect x="8.5" y="0.8" width="5" height="16" rx="1.2"/></g></svg>
  <svg class="a" style="left:112px;top:978px" width="20" height="17" viewBox="0 0 20 17"><g fill="none" stroke="#b5b3b1" stroke-width="1.2"><path d="M2 8 L9.5 2 L17 8 M14 5.5 L17 8 L14 9.5"/><rect x="5.5" y="11.5" width="9" height="4"/></g></svg>
  <svg class="a" style="left:152px;top:977px" width="16" height="18" viewBox="0 0 16 18"><g fill="none" stroke="#b5b3b1" stroke-width="1.2"><path d="M8 1 V11 M4.5 7.5 L8 11 L11.5 7.5"/><rect x="2.5" y="13.5" width="11" height="3.5"/></g></svg>
  <svg class="a" style="left:190px;top:977px" width="16" height="18" viewBox="0 0 16 18"><g fill="none" stroke="#b5b3b1" stroke-width="1.2"><path d="M8 11 V1 M4.5 4.5 L8 1 L11.5 4.5"/><rect x="2.5" y="13.5" width="11" height="3.5"/></g></svg>
  <div class="a" style="left:218px;top:979px;width:1px;height:13px;background:#dcdcdc"></div>
  <svg class="a" style="left:229px;top:977px" width="18" height="18" viewBox="0 0 18 18"><g fill="none" stroke="#6d6b69" stroke-width="1.2"><path d="M1 5 L4 2 H11 L13 4 V14 L10 17 H3.5 L1 14.5Z"/><path d="M4 5 L7 2 M7 8 L10 5 H16 V15 L13 17"/><rect x="7" y="8" width="6" height="9"/></g></svg>
  <svg class="a" style="left:266px;top:977px" width="20" height="18" viewBox="0 0 20 18"><g fill="none" stroke="#6d6b69" stroke-width="1.3"><circle cx="4" cy="4" r="2.7"/><circle cx="4" cy="14" r="2.7"/><circle cx="16" cy="9" r="2.7"/><path d="M6.5 5 L13.3 8 M6.5 13 L13.3 10"/></g></svg>
  <svg class="a" style="left:306px;top:977px" width="17" height="18" viewBox="0 0 17 18"><rect x="0.5" y="0.5" width="16" height="7.5" rx="3.75" fill="#1b7bf6"/><circle cx="4.5" cy="4.25" r="2" fill="#fff"/><rect x="0.5" y="9.8" width="16" height="7.5" rx="3.75" fill="#1b7bf6"/><circle cx="12.5" cy="13.55" r="2" fill="#fff"/></svg>
  <svg class="a" style="left:344px;top:977px" width="18" height="18" viewBox="0 0 18 18"><path d="M1 7.5 L16.5 1.5 L10.5 17 L9 9 Z" fill="none" stroke="#6d6b69" stroke-width="1.3" stroke-linejoin="round"/></svg>
  <div class="a" style="left:373px;top:979px;width:1px;height:13px;background:#dcdcdc"></div>
  <svg class="a" style="left:385px;top:978.5px" width="15" height="14" viewBox="0 0 15 14"><rect x="0" y="0" width="14.5" height="14" rx="2.5" fill="#6b6866"/><path d="M7.3 3 L3.8 11 M7.3 3 L10.8 11 M3 8.6 H11.6" stroke="#fff" stroke-width="1.2" fill="none"/></svg>
  <div class="t" style="left:408px;top:978px;font-size:14.5px;color:#262524">FoodPin</div>
  <div class="t" style="left:1260px;top:978.5px;font-size:15.2px;color:#8a8886">Line: 29&nbsp; Col: 91</div>
  <div class="a" style="left:1384px;top:979px;width:1px;height:14px;background:#e0e0e0"></div>
  <svg class="a" style="left:1395px;top:977px" width="19" height="18" viewBox="0 0 19 18"><rect x="1.2" y="1.2" width="16" height="15.5" rx="3" fill="none" stroke="#6d6b69" stroke-width="1.3"/><rect x="3.8" y="11" width="10.8" height="3" fill="#6d6b69"/></svg>
</div></div>
<!-- simulator -->
<div class="a" style="left:1502.5px;top:58.5px;width:396px;height:72px;border-radius:12px;background:#3b3633;box-shadow:0 0 0 0.6px rgba(0,0,0,.35),0 6px 18px rgba(0,0,0,.28)"></div>
<div class="a" style="left:1514px;top:69px;width:14.5px;height:14.5px;border-radius:50%;background:#675f5b"></div>
<div class="a" style="left:1539.5px;top:69px;width:14.5px;height:14.5px;border-radius:50%;background:#675f5b"></div>
<div class="a" style="left:1565px;top:69px;width:14.5px;height:14.5px;border-radius:50%;background:#675f5b"></div>
<div class="t" style="left:1600px;top:66.5px;font-size:17px;font-weight:bold;color:#8a8380">iPhone 14 Pro – iOS 16.0</div>
<svg class="a" style="left:1643px;top:98px" width="21" height="19" viewBox="0 0 21 19"><g fill="none" stroke="#8a8380" stroke-width="1.4" stroke-linejoin="round"><path d="M1.5 9.5 L10.5 1.5 L19.5 9.5 M4 7.5 V17.5 H17 V7.5 M15.5 2 V5"/></g><rect x="8.3" y="11.5" width="4.5" height="6" fill="#8a8380"/></svg>
<svg class="a" style="left:1698px;top:98px" width="24" height="19" viewBox="0 0 24 19"><g fill="none" stroke="#8a8380" stroke-width="1.4"><path d="M2 13 V3 Q2 1.5 3.5 1.5 H17"/><rect x="5" y="5" width="18" height="13" rx="2.5"/><circle cx="14" cy="11.5" r="3.6"/><path d="M10 5 L11.5 3 H16.5 L18 5"/></g></svg>
<svg class="a" style="left:1750px;top:97px" width="20" height="20" viewBox="0 0 20 20"><g fill="none" stroke="#8a8380" stroke-width="1.4"><rect x="6" y="7" width="12" height="12" rx="1.5"/><path d="M2.5 10 V5.5 Q2.5 3 5 3 H8 M6 0.8 L8.4 3 L6 5.2"/></g></svg>
<!-- phone -->
<div class="a" style="left:1508px;top:297px;width:6px;height:28px;border-radius:2px 0 0 2px;background:#2a2a2a;box-shadow:inset 0 0 0 0.8px #4a4a4a"></div>
<div class="a" style="left:1508px;top:353px;width:6px;height:59px;border-radius:2px 0 0 2px;background:#2a2a2a;box-shadow:inset 0 0 0 0.8px #4a4a4a"></div>
<div class="a" style="left:1508px;top:428px;width:6px;height:57px;border-radius:2px 0 0 2px;background:#2a2a2a;box-shadow:inset 0 0 0 0.8px #4a4a4a"></div>
<div class="a" style="left:1888px;top:392px;width:6px;height:92px;border-radius:0 2px 2px 0;background:#2a2a2a;box-shadow:inset 0 0 0 0.8px #4a4a4a"></div>
<div class="a" style="left:1513.5px;top:145.5px;width:374.5px;height:775px;border-radius:59px;background:#2e2e2e;box-shadow:0 0 0 1px #808080,0 6px 20px rgba(0,0,0,.3)"></div>
<div class="a" style="left:1518px;top:150.5px;width:365.5px;height:765px;border-radius:54px;background:#000;overflow:hidden">
  <div class="t" style="left:54.5px;top:21px;font-size:15.2px;font-weight:bold;color:#fff">10:05</div>
  <svg class="a" style="left:22px;top:38.5px" width="8" height="8" viewBox="0 0 8 8"><path d="M7 0.5 V7.5 L0.5 4Z" fill="#fff"/></svg>
  <div class="t" style="left:32px;top:37.5px;font-size:9.9px;font-weight:bold;color:#fff">Settings</div>
  <div class="a" style="left:257.5px;top:39px;width:3px;height:3px;border-radius:50%;background:#5a5a5a"></div><div class="a" style="left:262.2px;top:39px;width:3px;height:3px;border-radius:50%;background:#5a5a5a"></div><div class="a" style="left:266.9px;top:39px;width:3px;height:3px;border-radius:50%;background:#5a5a5a"></div><div class="a" style="left:271.6px;top:39px;width:3px;height:3px;border-radius:50%;background:#5a5a5a"></div>
  <svg class="a" style="left:280px;top:30px" width="16" height="12" viewBox="0 0 16 12"><path d="M8 11.5 L5.6 8.8 Q8 6.8 10.4 8.8Z M2.8 5.9 Q8 1.6 13.2 5.9 L11.6 7.6 Q8 4.8 4.4 7.6Z M0 3.1 Q8 -3.2 16 3.1 L14.5 4.7 Q8 -0.6 1.5 4.7Z" fill="#fff"/></svg>
  <div class="a" style="left:301.5px;top:30.5px;width:23px;height:11.5px;border-radius:4px;background:#fff"></div>
  <div class="a" style="left:325.5px;top:34px;width:1.5px;height:4px;border-radius:0 1px 1px 0;background:#8e8e8e"></div>
  <div class="t" style="left:25.5px;top:103px;font-size:29.6px;font-weight:bold;color:#e1610f">FoodPin</div>
  <div class="a" style="left:28.5px;top:151px;width:104.5px;height:103px;border-radius:14px;overflow:hidden;background:#252321">
    <svg class="a" style="left:-11px;top:-11.5px" width="127" height="127"><use href="#coffee" x="0" y="0" width="127" height="127"/></svg>
  </div>
  <div class="a" style="left:28.5px;top:446.5px;width:105px;height:104px;border-radius:14px;overflow:hidden;background:#b9c7d4">
    <svg class="a" style="left:0;top:0" width="105" height="104" viewBox="0 0 105 104">
      <defs><linearGradient id="bgw" x1="0" y1="0" x2="1" y2="0"><stop offset="0" stop-color="#8fa2b4"/><stop offset="0.5" stop-color="#b4c4d2"/><stop offset="1" stop-color="#c9d5df"/></linearGradient>
      <linearGradient id="tbl" x1="0" y1="0" x2="1" y2="0.6"><stop offset="0" stop-color="#8c6a4e"/><stop offset="0.45" stop-color="#b8a290"/><stop offset="1" stop-color="#ddd6d0"/></linearGradient></defs>
      <rect x="0" y="0" width="105" height="104" fill="url(#bgw)"/>
      <rect x="60" y="0" width="6" height="75" fill="#7f8f9e" opacity="0.6"/>
      <rect x="30" y="20" width="75" height="5" fill="#9aaaba" opacity="0.7"/>
      <path d="M0 16 H30 L32 40 L24 55 L30 80 L22 90 H0Z" fill="#121212"/>
      <path d="M26 40 L33 38 L34 62 L28 82 L21 80 L27 60Z" fill="#dfe6ee"/>
      <path d="M0 0 H48 C54 4 52 14 44 20 C30 22 12 18 0 17Z" fill="#a97a58"/>
      <path d="M34 22 L64 24 L48 46 Z" fill="#1e1916"/>
      <path d="M34 22 L42 8 L56 10 L64 24" fill="none" stroke="#3a3836" stroke-width="1.4"/>
      <path d="M63 27 Q72 40 76 65" fill="none" stroke="#8a4a1e" stroke-width="1.8"/>
      <path d="M0 88 L40 72 L105 62 V104 H0Z" fill="url(#tbl)"/>
      <path d="M55 64 H88 L86 94 Q72 97 58 94Z" fill="#c9b8a8"/>
      <path d="M56 68 Q46 70 47 78 Q48 86 57 87" fill="none" stroke="#c2b1a2" stroke-width="3.5"/>
      <ellipse cx="71.5" cy="64.5" rx="16.5" ry="2.5" fill="#e2d8ce"/>
    </svg>
  </div>
  <div class="a" style="left:0;top:0;width:365px;height:754.5px;overflow:hidden">
    <div class="a" style="left:28.5px;top:730px;width:105px;height:60px;border-radius:14px;overflow:hidden;background:linear-gradient(90deg,#6e6a68 0%,#d7a47c 14%,#ead0b0 26%,#9a8a80 36%,#4f5e72 44%,#8898aa 54%,#6f737a 68%,#9a9a98 80%,#c88a60 90%,#8a8580 100%)"></div>
    <div class="a" style="left:133px;top:742.5px;width:110px;height:2.5px;border-radius:1.25px;background:#4a4a4a"></div>
    <div class="t" style="left:151px;top:733.2px;font-size:32.1px;color:#fff">Teakha</div>
  </div>
  <div class="a" style="left:151px;top:152px;font-size:32.1px;line-height:40.8px;color:#fff;white-space:pre">Cafe
Deadend</div>
  <div class="a" style="left:151px;top:236.5px;font-size:27.2px;line-height:34.7px;color:#fff;white-space:pre">Coffee &amp;
Tea Shop</div>
  <div class="a" style="left:151px;top:301.5px;font-size:24.5px;line-height:31.63px;color:#8d8d8f;white-space:pre">G/F, 72 Po Hing
Fong, Sheung
Wan, Hong
Kong</div>
  <div class="a" style="left:151px;top:449px;font-size:32.1px;line-height:40.8px;color:#fff;white-space:pre">Homei</div>
  <div class="a" style="left:151px;top:490.5px;font-size:26.6px;line-height:34.7px;color:#fff;white-space:pre">Cafe</div>
  <div class="a" style="left:151px;top:521.5px;font-size:24.3px;line-height:31.3px;color:#8d8d8f;white-space:pre">Shop B, G/F,
22-24A Tai Ping
San Street
SOHO, Sheung
Wan, Hong
Kong</div>
</div>
</body></html>
